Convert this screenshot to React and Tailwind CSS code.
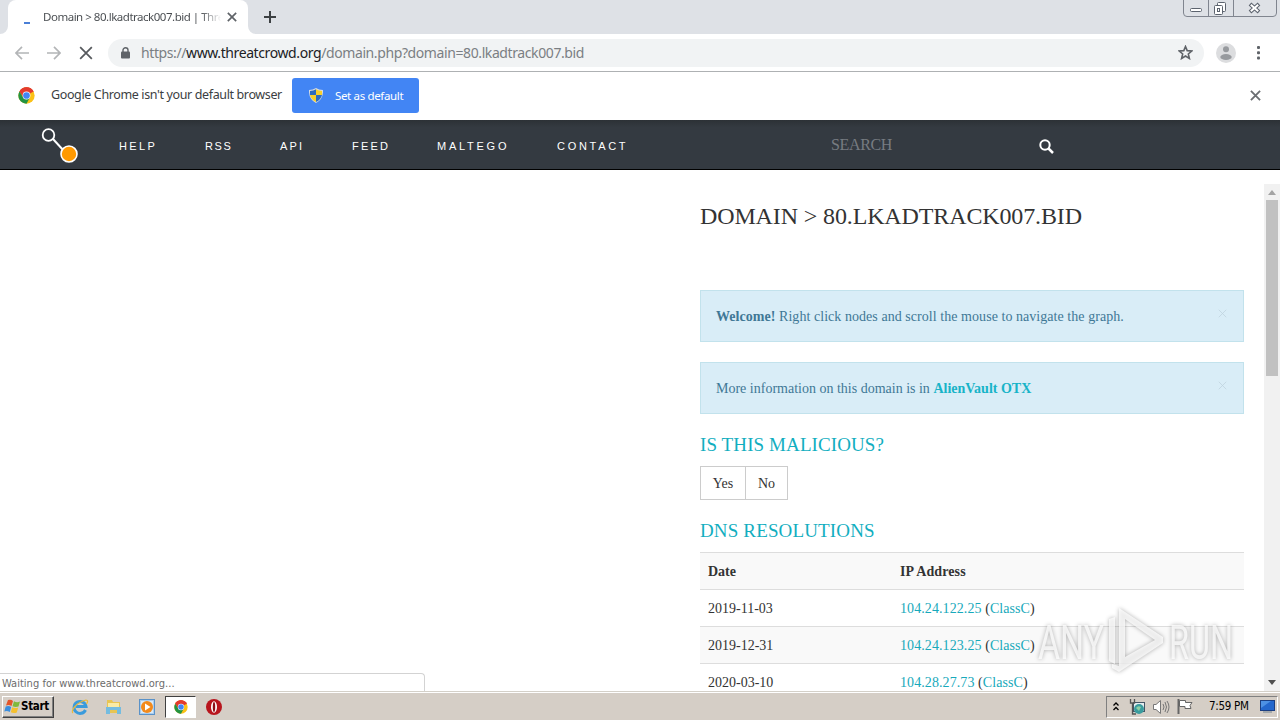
import { useState } from 'react';

const navItems = [
  { label: 'HELP', className: 'w-[86px] tracking-[2.4px]' },
  { label: 'RSS', className: 'w-[75px] tracking-[1.6px]' },
  { label: 'API', className: 'w-[72px] tracking-[2.2px]' },
  { label: 'FEED', className: 'w-[85px] tracking-[2.2px]' },
  { label: 'MALTEGO', className: 'w-[120px] tracking-[2.75px]' },
  { label: 'CONTACT', className: 'w-[100px] tracking-[2.7px]' },
];

const resolutions = [
  { date: '2019-11-03', ip: '104.24.122.25' },
  { date: '2019-12-31', ip: '104.24.123.25' },
  { date: '2020-03-10', ip: '104.28.27.73' },
];

const ChromeLogo = ({ className }) => (
  <svg viewBox="0 0 48 48" className={className}>
    <circle cx="24" cy="24" r="23" fill="#fbc116" />
    <path d="M24 24 L4.1 12.5 A23 23 0 0 1 43.9 12.5 Z" fill="#e33b2e" />
    <path d="M24 13 H44.2 A23 23 0 0 0 4.1 12.5 L14.5 29.5 Z" fill="#e33b2e" />
    <path d="M4.1 12.5 A23 23 0 0 0 24 47 L33.5 29.5 L24 34 L14.5 29.5 Z" fill="#229342" />
    <circle cx="24" cy="24" r="11" fill="#fff" />
    <circle cx="24" cy="24" r="9.5" fill="#4285f4" />
  </svg>
);

const Cross = ({ className, width = 2 }) => (
  <svg viewBox="0 0 12 12" className={className} stroke="currentColor" strokeWidth={width} fill="none">
    <path d="M1 1 L11 11 M11 1 L1 11" />
  </svg>
);

const TabStrip = () => (
  <div className="flex h-[34px] shrink-0 bg-[#dee1e6]">
    <svg className="mt-[26px] h-2 w-2" viewBox="0 0 8 8"><path d="M8 0 V8 H0 A8 8 0 0 0 8 0" fill="#fff" /></svg>
    <div className="flex h-full w-[240px] items-center rounded-t-lg bg-white pl-4">
      <div className="mt-3 h-[2px] w-[6px] bg-[#4a7fd6]" />
      <div className="ml-[13px] w-[178px] whitespace-nowrap bg-gradient-to-r from-[#45494d] from-88% to-white to-100% bg-clip-text text-[11.5px] tracking-[-0.48px] text-transparent">
        Domain &gt; 80.lkadtrack007.bid | Thre
      </div>
      <Cross className="ml-[6px] h-[10px] w-[10px] text-[#5f6368]" />
    </div>
    <svg className="mt-[26px] h-2 w-2" viewBox="0 0 8 8"><path d="M0 0 V8 H8 A8 8 0 0 1 0 0" fill="#fff" /></svg>
    <svg className="ml-2 mt-[11px] h-3 w-3" viewBox="0 0 12 12" stroke="#3c4043" strokeWidth="2"><path d="M6 0 V12 M0 6 H12" /></svg>
    <svg className="ml-auto mr-[3px] h-[17px] w-[94px]" viewBox="0 0 94 17" fill="none" stroke="#80858f">
      <path d="M.5 0 V13 Q.5 16.5 4 16.5 H90 Q93.5 16.5 93.5 13 V0 M25.5 0 V16 M50.5 0 V16" />
      <g stroke="#5c636e">
        <rect x="7.5" y="8.5" width="11" height="3" rx="1" fill="#fff" />
        <rect x="34.5" y="2.5" width="8" height="9" rx="1" fill="#fff" />
        <rect x="31.5" y="5.5" width="8" height="9" rx="1" fill="#fff" />
        <rect x="34.5" y="8.5" width="2" height="3" />
      </g>
      <path d="M67 4 L76 12 M76 4 L67 12" stroke="#5c636e" strokeWidth="4" />
      <path d="M67.8 4.7 L75.2 11.3 M75.2 4.7 L67.8 11.3" stroke="#fff" strokeWidth="2" />
    </svg>
  </div>
);

const Toolbar = () => (
  <div className="flex h-[38px] shrink-0 items-center border-b border-[#aeb1b3] bg-white pl-[15px]">
    <svg className="h-[14px] w-[14px]" viewBox="0 0 14 14" fill="none" stroke="#b3b5b7" strokeWidth="1.7"><path d="M14 7 H1 M7 .8 L.9 7 L7 13.2" /></svg>
    <svg className="ml-[18px] h-[14px] w-[14px]" viewBox="0 0 14 14" fill="none" stroke="#b3b5b7" strokeWidth="1.7"><path d="M0 7 H13 M7 .8 L13.1 7 L7 13.2" /></svg>
    <Cross className="ml-[18px] h-[14px] w-[14px] text-[#56595d]" width={1.5} />
    <div className="ml-[15px] flex h-7 w-[1096px] items-center rounded-full bg-[#f1f3f4] pl-[13px] pr-[11px]">
      <svg className="h-3 w-[9px]" viewBox="0 0 9 12"><rect y="4.5" width="9" height="7" rx="1" fill="#5f6368" /><path d="M2 5 V3 a2.5 2.2 0 0 1 5 0 V5" fill="none" stroke="#5f6368" strokeWidth="1.4" /></svg>
      <div className="-mt-px ml-[11px] whitespace-nowrap text-[14px] tracking-[-0.4px] text-[#7b7f83]">
        https://<span className="text-[#202124]">www.threatcrowd.org</span>/domain.php?domain=80.lkadtrack007.bid
      </div>
      <svg className="ml-auto h-[15px] w-[15px]" viewBox="0 0 24 24" fill="none" stroke="#5f6368" strokeWidth="2.6"><path d="M12 2.5 L14.7 9 L22 9.6 L16.5 14.3 L18.2 21.5 L12 17.6 L5.8 21.5 L7.5 14.3 L2 9.6 L9.3 9 Z" /></svg>
    </div>
    <svg className="ml-3 h-5 w-5" viewBox="0 0 20 20"><circle cx="10" cy="10" r="10" fill="#dcdddf" /><circle cx="10" cy="6.2" r="3" fill="#979a9e" /><ellipse cx="10" cy="14" rx="5.7" ry="3" fill="#979a9e" /></svg>
    <svg className="ml-[21px] h-[14px] w-[3px]" viewBox="0 0 3 14" fill="#5f6368"><rect width="3" height="3" rx="1" /><rect y="5.2" width="3" height="3" rx="1" /><rect y="10.4" width="3" height="3" rx="1" /></svg>
  </div>
);

const Shield = () => (
  <svg className="h-[15px] w-[14px]" viewBox="0 0 14 15">
    <path d="M7 0 Q10 2 14 2 Q14.5 11 7 15 Q-.5 11 0 2 Q4 2 7 0" fill="#d5dbe2" />
    <path d="M7 1.2 V7 H1 V3 Q4.5 3 7 1.2" fill="#2d6cc0" />
    <path d="M7 1.2 V7 H13 V3 Q9.5 3 7 1.2" fill="#f7d02c" />
    <path d="M7 7 V14 Q2 11.5 1 7 Z" fill="#f7d02c" />
    <path d="M7 7 V14 Q12 11.5 13 7 Z" fill="#2d6cc0" />
  </svg>
);

const InfoBar = () => (
  <div className="flex h-12 shrink-0 items-center bg-white pl-[18px] pr-[19px] pb-px">
    <ChromeLogo className="h-[17px] w-[17px]" />
    <div className="ml-4 w-[241px] whitespace-nowrap text-[12.5px] tracking-[-0.37px] text-[#3b3e42]">Google Chrome isn't your default browser</div>
    <button className="flex h-[35px] w-[127px] items-center rounded-[3px] bg-[#4285f4] pl-[17px] text-[11.5px] text-white">
      <Shield />
      <span className="ml-3 whitespace-nowrap tracking-[-0.35px]">Set as default</span>
    </button>
    <Cross className="ml-auto h-[11px] w-[11px] text-[#6b6e72]" />
  </div>
);

const SiteNav = () => (
  <nav className="flex h-[50px] shrink-0 items-center border-b border-black bg-[#343a41] bg-gradient-to-b from-[#2c3136] to-[#343a41] to-15% pl-10">
    <svg className="h-10 w-10" viewBox="0 0 40 40" fill="none" stroke="#fff">
      <path d="M13 14 L24 26" strokeWidth="2" />
      <circle cx="8.5" cy="10" r="5.8" strokeWidth="1.8" />
      <circle cx="29" cy="29" r="8" fill="#f90" strokeWidth="1.6" />
    </svg>
    <div className="ml-[39px] flex pt-[3px] font-['Liberation_Sans',sans-serif] text-[11px] text-white">
      {navItems.map((item) => (
        <a key={item.label} className={item.className}>{item.label}</a>
      ))}
    </div>
    <div className="ml-[174px] w-[208px] font-['Liberation_Serif',serif] text-[16px] tracking-[-0.35px] text-[#777c81]">SEARCH</div>
    <svg className="mt-[3px] h-[15px] w-[15px]" viewBox="0 0 15 15" fill="none" stroke="#fff"><circle cx="6" cy="6" r="4.7" strokeWidth="2" /><path d="M9.5 9.5 L14 14" strokeWidth="2.5" /></svg>
  </nav>
);

const Alert = ({ children, onClose }) => (
  <div className="mb-5 flex h-[52px] items-center justify-between border border-[#c2e2ec] bg-[#d9edf7] pl-[15px] pr-4 text-[14px] text-[#3f7896]">
    <div>{children}</div>
    <button onClick={onClose} className="mb-[6px]"><Cross className="h-[9px] w-[9px] text-[#bdd2de]" width={1} /></button>
  </div>
);

const Results = () => {
  const [showWelcome, setShowWelcome] = useState(true);
  const [showOtx, setShowOtx] = useState(true);

  return (
    <div className="w-[544px] font-['Liberation_Serif',serif] text-[#333]">
      <h2 className="mt-[32px] mb-[60px] h-7 whitespace-nowrap text-[24px] leading-7 tracking-[-0.13px]">DOMAIN &gt; 80.LKADTRACK007.BID</h2>
      {showWelcome && <Alert onClose={() => setShowWelcome(false)}><span className="tracking-[0.05px]"><b>Welcome!</b> Right click nodes and scroll the mouse to navigate the graph.</span></Alert>}
      {showOtx && <Alert onClose={() => setShowOtx(false)}>More information on this domain is in <b className="text-[#18b4c8]">AlienVault OTX</b></Alert>}
      <h3 className="mb-[11px] h-[21px] text-[19px] leading-[21px] tracking-[0.1px] text-[#12aebf]">IS THIS MALICIOUS?</h3>
      <div className="flex h-[34px] text-[14px]">
        <button className="w-[46px] border border-[#ccc]">Yes</button>
        <button className="-ml-px w-[43px] border border-[#ccc]">No</button>
      </div>
      <h3 className="mt-5 mb-[11px] h-[21px] text-[19px] leading-[21px] tracking-[0.14px] text-[#12aebf]">DNS RESOLUTIONS</h3>
      <table className="w-full table-fixed text-left text-[14px]">
        <thead>
          <tr className="h-[37px] border-t border-[#ddd] bg-[#f9f9f9]">
            <th className="w-[192px] pl-2">Date</th>
            <th className="pl-2 tracking-[0.1px]">IP Address</th>
          </tr>
        </thead>
        <tbody>
          {resolutions.map((row) => (
            <tr key={row.date} className="h-[37px] border-t border-[#ddd] even:bg-[#f9f9f9]">
              <td className="pl-2">{row.date}</td>
              <td className="pl-2 tracking-[0.08px]"><a className="text-[#18a9bb]">{row.ip}</a> (<a className="text-[#18a9bb]">ClassC</a>)</td>
            </tr>
          ))}
        </tbody>
      </table>
    </div>
  );
};

const ScrollBar = () => (
  <div className="mt-[14px] ml-auto flex w-4 flex-col items-center bg-[#f1f1f1]">
    <svg className="mt-[6px] h-[5px] w-2" viewBox="0 0 8 5"><path d="M0 5 L4 0 L8 5 Z" fill="#a3a3a3" /></svg>
    <div className="mt-[5px] h-[176px] w-3 bg-[#c1c1c1]" />
    <svg className="mt-auto mb-[6px] h-[5px] w-2" viewBox="0 0 8 5"><path d="M0 0 L4 5 L8 0 Z" fill="#505050" /></svg>
  </div>
);

const Watermark = () => (
  <svg className="pointer-events-none absolute top-[436px] left-[1035px] h-[70px] w-[200px] overflow-visible drop-shadow-[0_0_2px_rgba(0,0,0,0.4)]" viewBox="0 0 200 70" fill="#fff" fillOpacity=".75">
    <text x="3" y="53" fontFamily="Roboto, sans-serif" fontSize="48" fontWeight="400" textLength="66" lengthAdjust="spacingAndGlyphs">ANY</text>
    <text x="134" y="53" fontFamily="Roboto, sans-serif" fontSize="48" fontWeight="400" textLength="64" lengthAdjust="spacingAndGlyphs">RUN</text>
    <path d="M84 2 L128 31 V37 L84 66 L77 62 V58 L84 60 Z M90 13 V51 L120 34 Z M74 13 L80 11 V58 L74 55 Z" fillRule="evenodd" />
  </svg>
);

const ExplorerIcon = () => (
  <svg className="h-[18px] w-[18px]" viewBox="0 0 18 18" fill="none">
    <path d="M14.5 12 A6 6 0 1 1 15 8.5 H5" stroke="#3a9bdc" strokeWidth="3" />
    <path d="M2 15 C-1 13 6 4 15 2 Q18 2 15.5 6" stroke="#e9b93a" strokeWidth="1.2" />
  </svg>
);

const FolderIcon = () => (
  <svg className="h-4 w-[17px]" viewBox="0 0 17 16">
    <path d="M2 1 H7 L8 3 H15 V14 H2 Z" fill="#e8c553" />
    <path d="M3 4 H14 V8 H3 Z" fill="#f9eba5" />
    <path d="M1 8 H16 V15 H12 V11 H5 V15 H1 Z" fill="#74bce0" />
  </svg>
);

const Taskbar = () => (
  <footer className="flex h-[29px] shrink-0 items-center border-t border-[#d4d0c8] bg-[#d5cec6] pt-px shadow-[inset_0_1px_0_#fff]">
    <button className="ml-[2px] flex h-[22px] w-[52px] items-center border border-t-white border-l-white border-r-[#404040] border-b-[#404040] bg-[#d5cec6] pl-px font-['DejaVu_Sans_Condensed','DejaVu_Sans',sans-serif] text-[11.5px] font-bold text-black shadow-[inset_-1px_-1px_0_#808080]">
      <svg className="h-[17px] w-[17px] shrink-0" viewBox="0 0 17 17">
        <path d="M4 2 Q7 1 9 3 L7.5 8 Q5 6.5 2 7.5 Z" fill="#e4562a" />
        <path d="M10 3.3 Q13 5 16 3.5 L14.5 8.5 Q11.5 9.5 8.5 8.3 Z" fill="#7fb93c" />
        <path d="M1.7 8.5 Q5 7.5 7.2 9 L5.8 14 Q3 12.5 .3 13.5 Z" fill="#3b8ede" />
        <path d="M8.2 9.3 Q11 10.8 14.2 9.5 L12.8 14.5 Q9.5 15.8 6.8 14.3 Z" fill="#f5c02e" />
      </svg>
      <span className="tracking-[-0.3px]">Start</span>
    </button>
    <div className="ml-[17px] flex items-center">
      <ExplorerIcon />
      <div className="ml-4"><FolderIcon /></div>
      <svg className="ml-[17px] h-4 w-4" viewBox="0 0 16 16"><rect x=".5" y=".5" width="15" height="15" fill="#a9cdef" stroke="#5a92c8" /><rect x="2" y="2" width="12" height="12" fill="#d9eaf8" /><circle cx="8" cy="8" r="6" fill="#f28a1c" /><path d="M6 4.5 L11.5 8 L6 11.5 Z" fill="#fff" /></svg>
      <div className="ml-[10px] flex h-[22px] w-[31px] items-center justify-center border border-t-[#404040] border-l-[#404040] border-r-white border-b-white bg-white">
        <ChromeLogo className="h-[14px] w-[14px]" />
      </div>
      <svg className="ml-[10px] h-4 w-4" viewBox="0 0 16 16"><circle cx="8" cy="8" r="8" fill="#b8151d" /><ellipse cx="8" cy="8" rx="3" ry="5.8" fill="#fff" /><ellipse cx="8" cy="8" rx="1.2" ry="5" fill="#8d0f16" /></svg>
    </div>
    <div className="ml-auto mr-[2px] flex h-[22px] w-[172px] items-center border border-t-[#808080] border-l-[#808080] border-r-white border-b-white">
      <svg className="ml-[6px] h-[9px] w-[6px]" viewBox="0 0 6 9" fill="none" stroke="#000" strokeWidth="1.3"><path d="M.5 3.5 L3 1 L5.5 3.5 M.5 8 L3 5.5 L5.5 8" /></svg>
      <svg className="ml-[10px] h-4 w-4" viewBox="0 0 16 16"><rect x="4.5" y="3.5" width="11" height="9" fill="#e5edf0" stroke="#456" /><circle cx="10" cy="10" r="5" fill="#3a9c9e" /><path d="M7 9 Q9 6 12 8 L10 12 Z" fill="#8ed0a4" /><path d="M1.5 0 V4 H5.5 V0 M3.5 4 V15 H7" fill="none" stroke="#555" strokeWidth="1.3" /></svg>
      <svg className="ml-2 h-4 w-[17px]" viewBox="0 0 17 16" stroke="#777" fill="none"><path d="M.5 5.5 H3 L7.5 1.5 V14.5 L3 10.5 H.5 Z" fill="#fff" /><path d="M10 5 Q12 8 10 11 M12 3 Q15 8 12 13 M14 2 Q18 8 14 14" /></svg>
      <svg className="ml-[7px] h-[15px] w-4" viewBox="0 0 16 15" fill="#fff" stroke="#666"><path d="M1.5 0 V15" strokeWidth="2" /><path d="M2.5 1.5 H8.5 V3.5 H15 L13 6.5 L14 9.5 H8 V7.5 H2.5 Z" /></svg>
      <span className="ml-[16px] whitespace-nowrap font-['DejaVu_Sans_Condensed','DejaVu_Sans',sans-serif] text-[11.5px] tracking-[-0.3px] text-black">7:59 PM</span>
      <svg className="ml-auto mr-[2px] h-[13px] w-[15px]" viewBox="0 0 15 13"><rect x=".5" y=".5" width="14" height="10" fill="#2467cc" stroke="#1b3f82" /><path d="M1 1 H11 L1 8 Z" fill="#4d91e4" /><path d="M3 12 H12" stroke="#75838f" /></svg>
    </div>
  </footer>
);

const App = () => {
  return (
    <div className="flex h-[720px] w-[1280px] flex-col overflow-hidden bg-white font-['Noto_Sans',sans-serif]">
      <TabStrip />
      <Toolbar />
      <InfoBar />
      <SiteNav />
      <main className="relative flex h-[521px] shrink-0 overflow-hidden">
        <div className="w-[700px] shrink-0" />
        <Results />
        <ScrollBar />
        <Watermark />
        <div className="absolute bottom-0 left-0 h-[18px] w-[425px] rounded-tr border-t border-r border-[#d3d3d3] bg-white pl-[2px] font-['DejaVu_Sans_Condensed','DejaVu_Sans',sans-serif] text-[11px] leading-[19px] tracking-[0.02px] text-[#6c6c6c]">
          Waiting for www.threatcrowd.org...
        </div>
      </main>
      <Taskbar />
    </div>
  );
};

export default App;
